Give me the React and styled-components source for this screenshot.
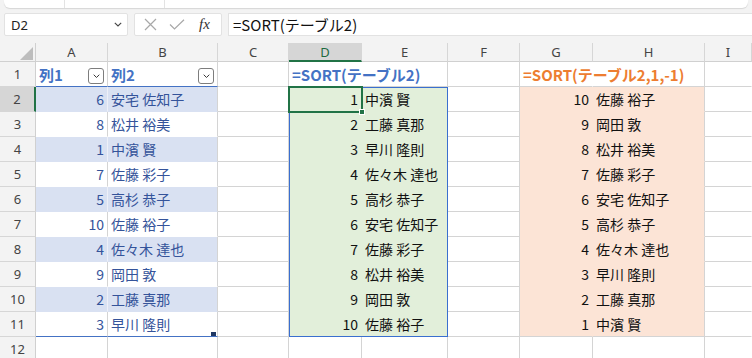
import React from 'react'
import styled, { createGlobalStyle } from 'styled-components'

const GlobalStyle = createGlobalStyle`
  html, body { margin: 0; padding: 0; background: #f3f3f3; }
  * { box-sizing: border-box; }
`

const COLS = ['A', 'B', 'C', 'D', 'E', 'F', 'G', 'H', 'I']

const source = [
  [6, '安宅 佐知子'], [8, '松井 裕美'], [1, '中濱 賢'], [7, '佐藤 彩子'], [5, '高杉 恭子'],
  [10, '佐藤 裕子'], [4, '佐々木 達也'], [9, '岡田 敦'], [2, '工藤 真那'], [3, '早川 隆則'],
]
const asc = [...source].sort((a, b) => a[0] - b[0])
const desc = [...source].sort((a, b) => b[0] - a[0])

const Page = styled.div`
  width: 752px;
  height: 358px;
  overflow: hidden;
  background: #f3f3f3;
  font-family: "Noto Sans", "Noto Sans CJK JP", sans-serif;
`

const Ribbon = styled.div`
  height: 8px;
  margin: 0 4px;
  background: #fff;
  border-radius: 0 0 6px 6px;
  box-shadow: 0 1px 1px rgba(0, 0, 0, 0.12);
  display: flex;
`

const RibbonGroup = styled.div`
  width: ${p => p.$w}px;
  border-right: 1px solid #e3e3e3;
`

const FormulaBar = styled.div`
  display: flex;
  height: 23px;
  margin: 5px 0 7px 4px;
  gap: 6px;
`

const NameBox = styled.div`
  width: 124px;
  background: #fff;
  border: 1px solid #e2e2e2;
  border-radius: 2px;
  display: flex;
  align-items: center;
  justify-content: space-between;
  padding: 0 5px 0 6px;
  font-size: 13px;
  color: #222;
`

const IconBox = styled.div`
  width: 88px;
  background: #fff;
  border: 1px solid #e2e2e2;
  border-radius: 2px;
  display: flex;
  align-items: center;
  padding: 0 6px 0 9px;
  gap: 12px;
`

const Fx = styled.span`
  font-family: "Liberation Serif", serif;
  font-style: italic;
  font-size: 15px;
  color: #333;
  margin-left: 2px;
`

const FormulaInput = styled.div`
  flex: 1;
  background: #fff;
  border: 1px solid #e2e2e2;
  border-right: none;
  display: flex;
  align-items: center;
  padding: 0 4px;
  font-family: "Noto Sans CJK JP", sans-serif;
  font-size: 15px;
  color: #111;
`

const Sheet = styled.div`
  display: grid;
  grid-template-columns: 36px 72px 110px 71px 73px 86px 72px 73px 112px 1fr;
  grid-template-rows: 19px repeat(12, 25px);
  background: #fff;
`

const Corner = styled.div`
  grid-row: 1;
  grid-column: 1;
  background: #f3f3f3;
  border-right: 1px solid #d0d0d0;
  border-bottom: 1px solid #d0d0d0;
  position: relative;
`

const ColHead = styled.div`
  grid-row: 1;
  grid-column: ${p => p.$c};
  background: ${p => (p.$sel ? '#d6d6d6' : '#f3f3f3')};
  border-right: 1px solid #d6d6d6;
  border-bottom: ${p => (p.$sel ? '2px solid #217346' : '1px solid #d0d0d0')};
  display: flex;
  align-items: center;
  justify-content: center;
  font-size: 13px;
  color: ${p => (p.$sel ? '#1d6a3e' : '#444')};
`

const RowHead = styled.div`
  grid-row: ${p => p.$r};
  grid-column: 1;
  background: ${p => (p.$sel ? '#d6d6d6' : '#f3f3f3')};
  border-right: ${p => (p.$sel ? '2px solid #217346' : '1px solid #d0d0d0')};
  border-bottom: 1px solid #d6d6d6;
  display: flex;
  align-items: center;
  justify-content: center;
  font-size: 13px;
  color: #444;
`

const Cell = styled.div`
  grid-row: ${p => p.$r};
  grid-column: ${p => p.$c};
  position: relative;
  z-index: ${p => (p.$over ? 1 : 0)};
  min-width: 0;
  overflow: visible;
  background: ${p => p.$bg || 'transparent'};
  border-right: 1px solid ${p => p.$vr || '#d4d4d4'};
  border-bottom: 1px solid ${p => p.$hb || '#d4d4d4'};
  display: flex;
  align-items: center;
  justify-content: ${p => (p.$right ? 'flex-end' : 'flex-start')};
  padding: 0 3px 0 3px;
  white-space: nowrap;
  font-family: "Noto Sans CJK JP", sans-serif;
  font-size: ${p => (p.$bold ? 15 : 14)}px;
  font-weight: ${p => (p.$bold ? 700 : 400)};
  color: ${p => p.$color || '#111'};
`

const FilterButton = styled.span`
  margin-left: auto;
  margin-top: 4px;
  width: 16px;
  height: 16px;
  border: 1px solid #7d7d7d;
  border-radius: 3px;
  background: #fff;
  display: flex;
  align-items: center;
  justify-content: center;
`

const SpillBox = styled.div`
  grid-row: 3 / 13;
  grid-column: 5 / 7;
  position: relative;
  z-index: 2;
  border: 1.5px solid #3a6fcf;
  pointer-events: none;
`

const Selection = styled.div`
  grid-row: 3;
  grid-column: 5;
  margin: -1px;
  border: 2px solid #217346;
  position: relative;
  z-index: 3;
  pointer-events: none;
`

const FillHandle = styled.span`
  position: absolute;
  right: -4px;
  bottom: -4px;
  width: 6px;
  height: 6px;
  background: #217346;
  border: 1px solid #fff;
`

const ResizeHandle = styled.span`
  position: absolute;
  right: 1px;
  bottom: 0;
  width: 5px;
  height: 4px;
  background: #1f3864;
`

const Chevron = ({ size = 8, color = '#333' }) => (
  <svg width={size} height={size * 0.6} viewBox="0 0 10 6">
    <path d="M1 1 L5 5 L9 1" fill="none" stroke={color} strokeWidth="1.4" />
  </svg>
)

const TABLE_TEXT = '#34539a'
const BAND = '#d9e1f2'
const BLUE = '#4472c4'
const ORANGE = '#ed7d31'
const GREEN = '#e2efda'
const PEACH = '#fce4d6'

const App = () => {
  const rows = []
  for (let i = 0; i < 10; i++) {
    const r = i + 3
    const banded = i % 2 === 0
    const last = i === 9
    const tBg = banded ? BAND : undefined
    const tHb = last ? BLUE : banded ? BAND : '#ffffff'
    rows.push(
      <React.Fragment key={r}>
        <RowHead $r={r} $sel={i === 0}>{i + 2}</RowHead>
        <Cell $r={r} $c={2} $right $bg={tBg} $hb={tHb} $vr={banded ? '#edf0f8' : '#d4d4d4'} $color={TABLE_TEXT}>{source[i][0]}</Cell>
        <Cell $r={r} $c={3} $bg={tBg} $hb={tHb} $color={TABLE_TEXT}>
          {source[i][1]}
          {last && <ResizeHandle />}
        </Cell>
        <Cell $r={r} $c={4} />
        <Cell $r={r} $c={5} $right $bg={GREEN} $vr={GREEN} $hb={last ? '#d4d4d4' : GREEN}>{asc[i][0]}</Cell>
        <Cell $r={r} $c={6} $bg={GREEN} $hb={last ? '#d4d4d4' : GREEN}>{asc[i][1]}</Cell>
        <Cell $r={r} $c={7} />
        <Cell $r={r} $c={8} $right $bg={PEACH} $vr={PEACH} $hb={last ? '#d4d4d4' : PEACH}>{desc[i][0]}</Cell>
        <Cell $r={r} $c={9} $bg={PEACH} $hb={last ? '#d4d4d4' : PEACH}>{desc[i][1]}</Cell>
        <Cell $r={r} $c={10} $vr="transparent" />
      </React.Fragment>
    )
  }

  return (
    <Page>
      <GlobalStyle />
      <Ribbon>
        <RibbonGroup $w={61} />
        <RibbonGroup $w={100} />
      </Ribbon>
      <FormulaBar>
        <NameBox>
          D2
          <Chevron size={8} color="#444" />
        </NameBox>
        <IconBox>
          <svg width="13" height="13" viewBox="0 0 13 13">
            <path d="M1 1 L12 12 M12 1 L1 12" stroke="#a8a8a8" strokeWidth="1.2" fill="none" />
          </svg>
          <svg width="16" height="11" viewBox="0 0 16 11">
            <path d="M1 5.5 L5.5 10 L15 0.8" stroke="#a8a8a8" strokeWidth="1.2" fill="none" />
          </svg>
          <Fx>fx</Fx>
        </IconBox>
        <FormulaInput>=SORT(テーブル2)</FormulaInput>
      </FormulaBar>
      <Sheet>
        <Corner>
          <svg width="36" height="19" viewBox="0 0 36 19" style={{ position: 'absolute', left: 0, top: 0 }}>
            <path d="M20 17 L33 17 L33 4 Z" fill="#bdbdbd" />
          </svg>
        </Corner>
        {COLS.map((c, i) => (
          <ColHead key={c} $c={i + 2} $sel={c === 'D'}>{c}</ColHead>
        ))}

        <RowHead $r={2}>1</RowHead>
        <Cell $r={2} $c={2} $bold $color={BLUE} $hb={BLUE}>
          列1
          <FilterButton><Chevron size={7} /></FilterButton>
        </Cell>
        <Cell $r={2} $c={3} $bold $color={BLUE} $hb={BLUE}>
          列2
          <FilterButton><Chevron size={7} /></FilterButton>
        </Cell>
        <Cell $r={2} $c={4} />
        <Cell $r={2} $c={5} $bold $over $color={BLUE} $vr="transparent">=SORT(テーブル2)</Cell>
        <Cell $r={2} $c={6} />
        <Cell $r={2} $c={7} />
        <Cell $r={2} $c={8} $bold $over $color={ORANGE} $vr="transparent">=SORT(テーブル2,1,-1)</Cell>
        <Cell $r={2} $c={9} />
        <Cell $r={2} $c={10} $vr="transparent" />

        {rows}

        <RowHead $r={13}>12</RowHead>
        {COLS.map((c, i) => (
          <Cell key={c} $r={13} $c={i + 2} $vr={c === 'I' ? 'transparent' : undefined} />
        ))}

        <SpillBox />
        <Selection><FillHandle /></Selection>
      </Sheet>
    </Page>
  )
}

export default App
